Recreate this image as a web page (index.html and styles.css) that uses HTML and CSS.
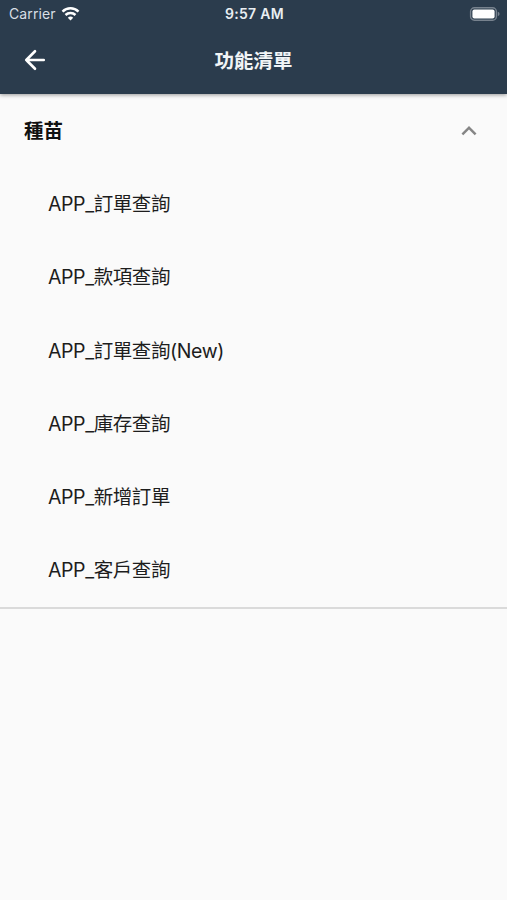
FILE: index.html
```html
<!DOCTYPE html>
<html lang="zh-Hant">
<head>
<meta charset="utf-8">
<title>功能清單</title>
<link rel="stylesheet" href="styles.css">
</head>
<body>

<header class="appbar">
	<div class="status">
		<div class="carrier">
			<span>Carrier</span>
			<svg width="19" height="14" viewBox="0 0 18 14" fill="none" stroke="#fff" stroke-width="2.5">
				<path d="M1 4.6a11.5 11.5 0 0 1 16 0"/>
				<path d="M4 8a7.2 7.2 0 0 1 10 0"/>
				<path d="M9 13.4L6.3 10.7a3.9 3.9 0 0 1 5.4 0z" fill="#fff" stroke="none"/>
			</svg>
		</div>
		<div class="time">9:57 AM</div>
		<div class="battery">
			<svg width="31" height="14" viewBox="0 0 31 14">
				<rect x="1.6" y="0.8" width="25.8" height="12.4" rx="3.8" fill="none" stroke="#77828e" stroke-width="1.4"/>
				<rect x="3.4" y="2.5" width="22.2" height="9" rx="2" fill="#fff"/>
				<path d="M28.8 4.8v4.4q1.8-.6 1.8-2.2t-1.8-2.2z" fill="#77828e"/>
			</svg>
		</div>
	</div>
	<div class="toolbar">
		<svg class="back" width="30" height="30" viewBox="0 0 24 24" fill="none" stroke="#fff" stroke-width="2.1" stroke-linecap="round" stroke-linejoin="round"><path d="M19 12H5M12 5l-7 7 7 7"/></svg>
		<h1 class="title">功能清單</h1>
	</div>
</header>

<section class="group">
	<div class="group-head">
		<h2 class="group-name">種苗</h2>
		<svg width="30" height="30" viewBox="0 0 24 24" fill="#858585"><path d="M12 8l-6 6 1.41 1.41L12 10.83l4.59 4.58L18 14z"/></svg>
	</div>
	<ul class="menu">
		<li>APP_訂單查詢</li>
		<li>APP_款項查詢</li>
		<li>APP_訂單查詢(New)</li>
		<li>APP_庫存查詢</li>
		<li>APP_新增訂單</li>
		<li>APP_客戶查詢</li>
	</ul>
</section>

</body>
</html>
```
FILE: styles.css
```css
body {
	margin: 0;
	background: #fafafa;
	color: #1d1d1d;
	font-family: Inter, "Noto Sans CJK TC", sans-serif;
}

.appbar {
	height: 94px;
	background: #2b3c4d;
	color: #fff;
	box-shadow: 0 1px 4px rgba(0, 0, 0, 0.4);
}

.status {
	display: grid;
	grid-template-columns: 1fr auto 1fr;
	align-items: center;
	height: 27px;
	padding: 0 7px 0 9px;
	font-size: 14px;
}

.carrier {
	display: flex;
	align-items: center;
	gap: 5px;
	color: #d9dfe5;
	letter-spacing: 0.1px;
}

.time {
	color: #e9eef2;
	font-weight: 600;
	letter-spacing: 0.3px;
}

.battery {
	display: flex;
	justify-content: flex-end;
}

.toolbar {
	display: grid;
	grid-template-columns: 1fr auto 1fr;
	align-items: center;
	height: 65px;
	padding: 0 20px;
}

.title {
	margin: 0;
	color: #f1f4f6;
	font-size: 19.5px;
	font-weight: 700;
}

.group {
	height: 513px;
	border-bottom: 2px solid #dadada;
}

.group-head {
	display: flex;
	align-items: center;
	justify-content: space-between;
	height: 73px;
	padding: 0 23px 0 24px;
}

.group-name {
	margin: -2px 0 0;
	color: #111;
	font-size: 19.5px;
	font-weight: 700;
}

.menu {
	margin: 0;
	padding: 1px 0 0 48px;
	list-style: none;
	font-size: 19.5px;
	letter-spacing: -0.4px;
}

.menu li {
	height: 73.3px;
	line-height: 73.6px;
}
```
